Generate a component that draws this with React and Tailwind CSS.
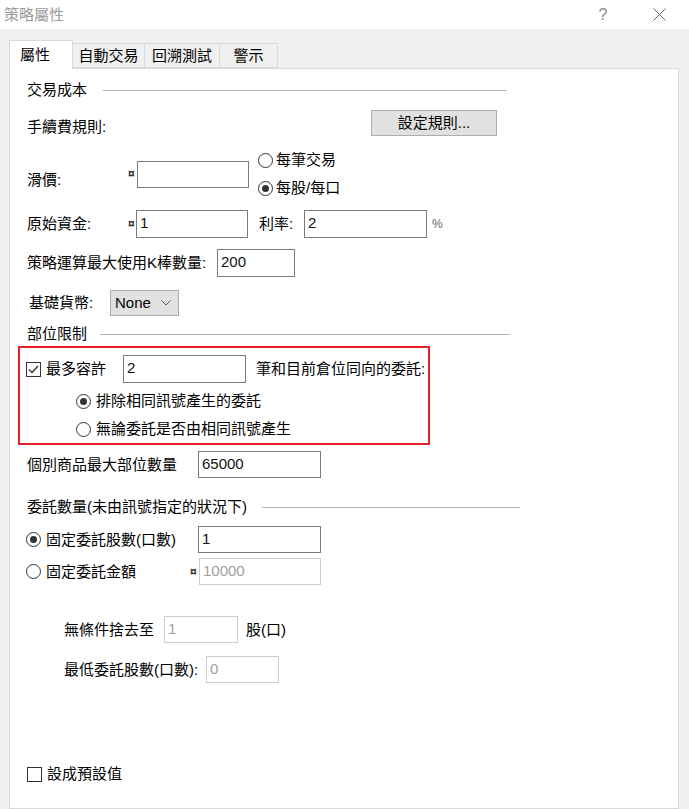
import React from 'react';

const FONT = { fontFamily: '"Liberation Sans", "Noto Sans CJK TC", sans-serif' };

// Windows-style radio button
const Radio = ({ checked }) => (
  <span className="w-[15px] h-[15px] rounded-full border border-[#333333] bg-white flex items-center justify-center shrink-0">
    {checked && <span className="w-[7px] h-[7px] rounded-full bg-[#333333]" />}
  </span>
);

const Checkbox = ({ checked }) => (
  <span className="w-[15px] h-[15px] border border-[#333333] bg-white flex items-center justify-center shrink-0">
    {checked && (
      <svg width="13" height="13" viewBox="0 0 13 13" fill="none">
        <path d="M2 6.5 L5 9.5 L11 3" stroke="#333333" strokeWidth="1.3" />
      </svg>
    )}
  </span>
);

const Field = ({ value = '', width, height = 'h-[28px]', disabled = false }) => (
  <div
    className={`${width} ${height} border bg-white flex items-center pl-[3px] pb-[2px] shrink-0 ${
      disabled ? 'border-[#cccccc] text-[#a0a0a0]' : 'border-[#7a7a7a] text-[#111]'
    }`}
  >
    {value}
  </div>
);

const Header = ({ title, width, gap }) => (
  <div className={`flex items-center h-[20px] ${width}`}>
    <span className="shrink-0">{title}</span>
    <span className={`flex-1 h-px bg-[#b4b4b4] ${gap}`} />
  </div>
);

const Cur = ({ width }) => (
  <span className={`${width} text-[12px] font-bold leading-none shrink-0 text-[#333]`}>¤</span>
);

export default function App() {
  return (
    <div className="w-[689px] h-[809px] bg-[#f0f0f0] flex flex-col overflow-hidden text-[15px] leading-[20px] text-black" style={FONT}>
      {/* Title bar */}
      <div className="h-[29px] bg-white flex items-center shrink-0">
        <span className="pl-[4px] text-[#9a9a9a]">策略屬性</span>
        <div className="ml-auto flex items-center mr-[23px]">
          <span className="w-[12px] text-center text-[#888] text-[16px]">?</span>
          <svg className="ml-[44px]" width="13" height="13" viewBox="0 0 13 13">
            <path d="M0.5 0.5 L12.5 12.5 M12.5 0.5 L0.5 12.5" stroke="#666" strokeWidth="1" />
          </svg>
        </div>
      </div>

      {/* Tabs */}
      <div className="mt-[11px] h-[28px] flex items-end pl-[9px] shrink-0">
        <div className="w-[64px] h-[29px] -mb-px bg-white border border-b-0 border-[#d9d9d9] flex items-center pl-[10px] relative z-10">
          屬性
        </div>
        <div className="w-[72px] h-[25px] bg-[#f0f0f0] border border-l-0 border-[#d9d9d9] flex items-center justify-center">自動交易</div>
        <div className="w-[75px] h-[25px] bg-[#f0f0f0] border border-l-0 border-[#d9d9d9] flex items-center justify-center">回溯測試</div>
        <div className="w-[58px] h-[25px] bg-[#f0f0f0] border border-l-0 border-[#d9d9d9] flex items-center justify-center">警示</div>
      </div>

      {/* Pane */}
      <div className="ml-[9px] w-[670px] flex-1 bg-white border border-[#d9d9d9] pl-[17px] flex flex-col">
        <div className="mt-[11px]">
          <Header title="交易成本" width="w-[480px]" gap="ml-[16px]" />
        </div>

        <div className="mt-[10px] h-[26px] flex items-center">
          <span className="w-[344px] mt-[8px]">手續費規則:</span>
          <div className="w-[126px] h-[26px] bg-[#e1e1e1] border border-[#adadad] flex items-center justify-center">
            設定規則...
          </div>
        </div>

        <div className="mt-[11px] h-[54px] flex items-center">
          <span className="w-[101px] mt-[12px]">滑價:</span>
          <Cur width="w-[9px]" />
          <Field width="w-[112px]" height="h-[27px]" />
          <div className="ml-[9px] flex flex-col">
            <div className="h-[28px] flex items-center">
              <Radio />
              <span className="ml-[3px]">每筆交易</span>
            </div>
            <div className="h-[28px] flex items-center">
              <Radio checked />
              <span className="ml-[3px]">每股/每口</span>
            </div>
          </div>
        </div>

        <div className="mt-[8px] h-[29px] flex items-center">
          <span className="w-[101px]">原始資金:</span>
          <Cur width="w-[8px]" />
          <Field value="1" width="w-[112px]" />
          <span className="ml-[11px] w-[45px]">利率:</span>
          <Field value="2" width="w-[123px]" />
          <span className="ml-[5px] text-[12px] text-[#666]">%</span>
        </div>

        <div className="mt-[11px] h-[28px] flex items-center">
          <span className="w-[190px]">策略運算最大使用K棒數量:</span>
          <Field value="200" width="w-[78px]" />
        </div>

        <div className="mt-[13px] h-[26px] flex items-center">
          <span className="w-[83px] pl-[2px]">基礎貨幣:</span>
          <div className="w-[69px] h-[26px] bg-[#e1e1e1] border border-[#adadad] flex items-center pl-[4px]">
            <span>None</span>
            <svg className="ml-auto mr-[7px]" width="10" height="6" viewBox="0 0 10 6" fill="none">
              <path d="M0.5 0.5 L5 5 L9.5 0.5" stroke="#555" strokeWidth="1" />
            </svg>
          </div>
        </div>

        <div className="mt-[8px]">
          <Header title="部位限制" width="w-[483px]" gap="ml-[13px]" />
        </div>

        {/* Highlighted block */}
        <div className="mt-[2px] -ml-[9px] w-[412px] h-[99px] border-2 border-[#e3222b] flex flex-col">
          <div className="mt-[7px] h-[28px] flex items-center pl-[6px]">
            <Checkbox checked />
            <span className="ml-[5px] w-[77px]">最多容許</span>
            <Field value="2" width="w-[123px]" />
            <span className="ml-[10px]">筆和目前倉位同向的委託:</span>
          </div>
          <div className="mt-[4px] h-[28px] flex items-center pl-[56px]">
            <Radio checked />
            <span className="ml-[5px]">排除相同訊號產生的委託</span>
          </div>
          <div className="h-[28px] flex items-center pl-[56px]">
            <Radio />
            <span className="ml-[5px]">無論委託是否由相同訊號產生</span>
          </div>
        </div>

        <div className="mt-[6px] h-[27px] flex items-center">
          <span className="w-[171px]">個別商品最大部位數量</span>
          <Field value="65000" width="w-[123px]" height="h-[27px]" />
        </div>

        <div className="mt-[19px]">
          <Header title="委託數量(未由訊號指定的狀況下)" width="w-[493px]" gap="ml-[15px]" />
        </div>

        <div className="mt-[9px] h-[27px] flex items-center -ml-px">
          <div className="w-[172px] flex items-center">
            <Radio checked />
            <span className="ml-[5px]">固定委託股數(口數)</span>
          </div>
          <Field value="1" width="w-[123px]" height="h-[27px]" />
        </div>

        <div className="mt-[5px] h-[27px] flex items-center -ml-px">
          <div className="w-[164px] flex items-center">
            <Radio />
            <span className="ml-[5px]">固定委託金額</span>
          </div>
          <Cur width="w-[9px]" />
          <Field value="10000" width="w-[122px]" height="h-[27px]" disabled />
        </div>

        <div className="mt-[31px] h-[27px] flex items-center ml-[37px]">
          <span className="w-[100px]">無條件捨去至</span>
          <Field value="1" width="w-[74px]" height="h-[27px]" disabled />
          <span className="ml-[8px]">股(口)</span>
        </div>

        <div className="mt-[13px] h-[27px] flex items-center ml-[37px]">
          <span className="w-[142px]">最低委託股數(口數):</span>
          <Field value="0" width="w-[73px]" height="h-[27px]" disabled />
        </div>

        <div className="mt-[83px] h-[16px] flex items-center">
          <Checkbox />
          <span className="ml-[5px]">設成預設值</span>
        </div>
      </div>
    </div>
  );
}
